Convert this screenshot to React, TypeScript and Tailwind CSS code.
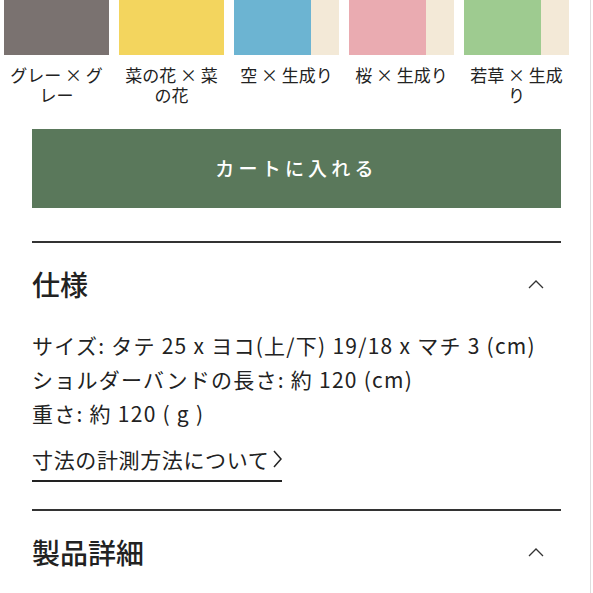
import React from "react";

type Swatch = {
  label: string;
  main: string;
  side?: string;
};

const swatches: Swatch[] = [
  { label: "グレー × グレー", main: "bg-[#7a7270]" },
  { label: "菜の花 × 菜の花", main: "bg-[#f3d55e]" },
  { label: "空 × 生成り", main: "bg-[#6cb4d2]", side: "bg-[#f3e9d7]" },
  { label: "桜 × 生成り", main: "bg-[#eaabb1]", side: "bg-[#f3e9d7]" },
  { label: "若草 × 生成り", main: "bg-[#9ecb90]", side: "bg-[#f3e9d7]" },
];

const specs = [
  "サイズ: タテ 25 x ヨコ(上/下) 19/18 x マチ 3 (cm)",
  "ショルダーバンドの長さ: 約 120 (cm)",
  "重さ: 約 120 ( g )",
];

function ChevronUp() {
  return (
    <svg width="16" height="10" viewBox="0 0 16 10" fill="none" className="mr-[17px]">
      <polyline points="1,9 8,2 15,9" stroke="#333" strokeWidth="1.3" />
    </svg>
  );
}

function ChevronRight() {
  return (
    <svg width="10" height="18" viewBox="0 0 10 18" fill="none" className="ml-[3px]">
      <polyline points="2,1 9,9 2,17" stroke="#222" strokeWidth="1.5" />
    </svg>
  );
}

export default function App() {
  return (
    <div
      className="w-[593px] h-[593px] overflow-hidden bg-white text-[#222]"
      style={{ fontFamily: '"Noto Sans CJK JP", "Noto Sans", sans-serif' }}
    >
      <div className="w-[591px] h-full border-r border-[#dedede]">
        {/* color swatches */}
        <div className="flex gap-[10px] pl-[4px]">
          {swatches.map((s) => (
            <div key={s.label} className="w-[105px] flex flex-col">
              <div className="h-[55px] flex">
                <div className={`${s.main} flex-1`} />
                {s.side && <div className={`${s.side} w-[28px]`} />}
              </div>
              <p className="mt-[10px] text-[17px] leading-[20px] text-center">
                {s.label}
              </p>
            </div>
          ))}
        </div>

        <div className="pl-[32px] pr-[29px]">
          <button className="mt-[24px] h-[79px] w-full bg-[#5a785b] text-white text-[19px] font-medium tracking-[0.22em]">
            カートに入れる
          </button>

          <div className="mt-[33px] h-[2px] bg-[#333]" />

          {/* 仕様 */}
          <div className="h-[82px] flex items-center justify-between">
            <h2 className="text-[28px] font-medium leading-none">仕様</h2>
            <ChevronUp />
          </div>

          <div className="mt-[3px] text-[21px] leading-[34px] tracking-[0.06em]">
            {specs.map((line) => (
              <p key={line}>{line}</p>
            ))}
          </div>

          <a className="mt-[12px] inline-flex items-center pb-[4px] border-b-2 border-[#222] text-[21px] leading-[34px] tracking-[0.03em]">
            寸法の計測方法について
            <ChevronRight />
          </a>

          <div className="mt-[27px] h-[2px] bg-[#333]" />

          {/* 製品詳細 */}
          <div className="h-[82px] flex items-center justify-between">
            <h2 className="text-[28px] font-medium leading-none">製品詳細</h2>
            <ChevronUp />
          </div>
        </div>
      </div>
    </div>
  );
}
